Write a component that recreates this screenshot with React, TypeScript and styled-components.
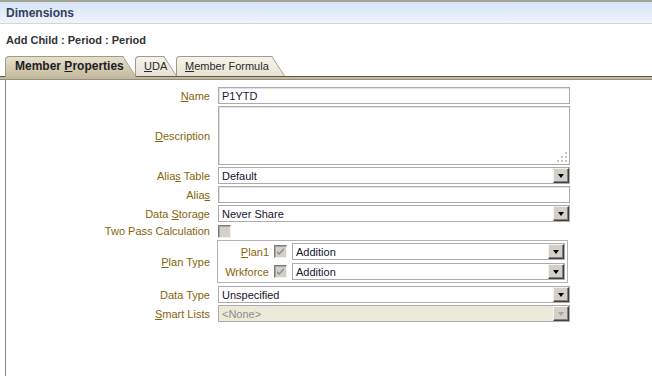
import React from 'react';
import styled, { createGlobalStyle } from 'styled-components';

const Global = createGlobalStyle`
  html, body { margin: 0; padding: 0; background: #fff; }
  * { box-sizing: border-box; }
`;

const Page = styled.div`
  width: 652px;
  height: 376px;
  overflow: hidden;
  font-family: "Liberation Sans", Arial, sans-serif;
  font-size: 11px;
  background: #fff;
  display: flex;
  flex-direction: column;
`;

const TitleBar = styled.div`
  height: 24px;
  flex: none;
  border-top: 2px solid #a4a494;
  border-bottom: 1px solid #d6d6cc;
  background: linear-gradient(#d7e3f5, #eef4fc);
  padding-left: 6px;
  display: flex;
  align-items: center;
  font-size: 12px;
  font-weight: bold;
  color: #33425c;
`;

const Subtitle = styled.div`
  height: 32px;
  flex: none;
  padding: 10px 0 0 6px;
  font-weight: bold;
  color: #333;
`;

const TabRow = styled.div`
  display: flex;
  align-items: flex-end;
  padding-left: 5px;
  height: 21px;
  margin-bottom: -1px;
  position: relative;
  z-index: 1;
  flex: none;
`;

const Tab = styled.div<{ $active?: boolean; $w: number }>`
  position: relative;
  z-index: ${p => (p.$active ? 3 : 1)};
  width: ${p => p.$w}px;
  height: ${p => (p.$active ? 21 : 20)}px;
  margin-bottom: ${p => (p.$active ? 0 : 1)}px;
  margin-right: -1px;
  padding: 0 0 ${p => (p.$active ? 1 : 0)}px ${p => (p.$active ? 10 : 9)}px;
  display: flex;
  align-items: center;
  font-size: ${p => (p.$active ? 12 : 11)}px;
  font-weight: ${p => (p.$active ? 'bold' : 'normal')};
  color: ${p => (p.$active ? '#1e1e1e' : '#2a2a2a')};
  &::before {
    content: '';
    position: absolute;
    left: 0;
    top: 0;
    bottom: 0;
    right: 13px;
    border: 1px solid #a29a84;
    border-right: none;
    border-bottom: none;
    border-top-left-radius: 4px;
    background: ${p => (p.$active ? 'linear-gradient(#e6e0cc, #c4bba0)' : 'linear-gradient(#f6f4ec, #e6e2d4)')};
  }
  &::after {
    content: '';
    position: absolute;
    top: 0;
    bottom: 0;
    right: 13px;
    width: 16px;
    border-top: 1px solid #a29a84;
    border-right: 1px solid #a29a84;
    transform: skewX(33deg);
    transform-origin: top left;
    background: ${p => (p.$active ? 'linear-gradient(#e6e0cc, #c4bba0)' : 'linear-gradient(#f6f4ec, #e6e2d4)')};
  }
  > span {
    position: relative;
    z-index: 1;
  }
`;

const Band = styled.div`
  height: 4px;
  flex: none;
  background: #c2ba9e;
  border-top: 1px solid #5e5a4a;
  border-bottom: 1px solid #948e7c;
`;

const Panel = styled.div`
  flex: 1;
  margin-left: 5px;
  border-left: 1px solid #8a8a8a;
  padding-top: 7px;
`;

const Form = styled.div`
  display: grid;
  grid-template-columns: 204px 352px;
  column-gap: 8px;
  row-gap: 2px;
`;

const Label = styled.div`
  justify-self: end;
  align-self: center;
  color: #86650a;
  white-space: nowrap;
  u {
    text-underline-offset: 1px;
  }
`;

const Field = styled.div<{ $h?: number }>`
  position: relative;
  height: ${p => p.$h ?? 17}px;
  border: 1px solid #ababab;
  box-shadow: inset 1px 1px 0 #e2e2e2;
  background: #fff;
  padding: ${p => (p.$h ? '2px 3px' : '0 3px')};
  display: flex;
  align-items: ${p => (p.$h ? 'flex-start' : 'center')};
  color: #18183c;
`;

const Grip = styled.svg`
  position: absolute;
  right: 1px;
  bottom: 1px;
`;

const SelectBox = styled.div<{ $disabled?: boolean }>`
  height: 17px;
  flex: 1;
  border: 1px solid #ababab;
  background: ${p => (p.$disabled ? '#ebe9d7' : '#fff')};
  color: ${p => (p.$disabled ? '#8e8e8e' : '#141430')};
  display: flex;
  align-items: center;
  padding-left: 3px;
`;

const SelectText = styled.span`
  flex: 1;
`;

const Caret = styled.div<{ $disabled?: boolean }>`
  width: 16px;
  height: 15px;
  background: #d4d0c8;
  border-top: 1px solid #f4f4f0;
  border-left: 1px solid #f4f4f0;
  border-right: 1px solid #404040;
  border-bottom: 1px solid #404040;
  box-shadow: inset -1px -1px 0 #808080;
  display: flex;
  align-items: center;
  justify-content: center;
  &::after {
    content: '';
    width: 0;
    height: 0;
    margin-top: 1px;
    border-left: 3.5px solid transparent;
    border-right: 3.5px solid transparent;
    border-top: 4px solid ${p => (p.$disabled ? '#a4a4a4' : '#000')};
  }
`;

const Check = styled.div`
  width: 13px;
  height: 13px;
  background: #d4d0c8;
  border-top: 1px solid #7a7a7a;
  border-left: 1px solid #7a7a7a;
  border-bottom: 1px solid #f2f2f2;
  border-right: 1px solid #f2f2f2;
  box-shadow: inset 1px 1px 0 #a8a8a8;
  display: flex;
  align-items: center;
  justify-content: center;
`;

const CheckCell = styled.div`
  height: 14px;
  display: flex;
  align-items: flex-end;
`;

const Group = styled.div`
  width: 351px;
  margin-left: -1px;
  border: 1px solid #b4b4b4;
  padding: 2px 2px 2px 0;
  display: grid;
  grid-template-columns: 51px 13px 1fr;
  column-gap: 5px;
  row-gap: 3px;
  margin-bottom: 1px;
  align-items: center;
`;

const SubLabel = styled.div`
  justify-self: end;
  color: #86650a;
  white-space: nowrap;
  u {
    text-underline-offset: 1px;
  }
`;

function Select({ value, disabled }: { value: string; disabled?: boolean }) {
  return (
    <SelectBox $disabled={disabled}>
      <SelectText>{value}</SelectText>
      <Caret $disabled={disabled} />
    </SelectBox>
  );
}

function Tick() {
  return (
    <svg width="9" height="9" viewBox="0 0 9 9">
      <path d="M1 4 L3 6 L8 1 L8 3 L3 8 L1 6 Z" fill="#8c8c8c" />
    </svg>
  );
}

export default function App() {
  return (
    <Page>
      <Global />
      <TitleBar>Dimensions</TitleBar>
      <Subtitle>Add Child : Period : Period</Subtitle>
      <TabRow>
        <Tab $active $w={131}>
          <span>Member <u>P</u>roperties</span>
        </Tab>
        <Tab $w={42}>
          <span><u>U</u>DA</span>
        </Tab>
        <Tab $w={109}>
          <span><u>M</u>ember Formula</span>
        </Tab>
      </TabRow>
      <Band />
      <Panel>
        <Form>
          <Label><u>N</u>ame</Label>
          <Field>P1YTD</Field>

          <Label><u>D</u>escription</Label>
          <Field $h={59}>
            <Grip width="11" height="11" viewBox="0 0 11 11">
              <rect x="8" y="0" width="2" height="2" fill="#c4c4c4" />
              <rect x="4" y="4" width="2" height="2" fill="#c4c4c4" />
              <rect x="8" y="4" width="2" height="2" fill="#c4c4c4" />
              <rect x="0" y="8" width="2" height="2" fill="#c4c4c4" />
              <rect x="4" y="8" width="2" height="2" fill="#c4c4c4" />
              <rect x="8" y="8" width="2" height="2" fill="#c4c4c4" />
            </Grip>
          </Field>

          <Label>Alia<u>s</u> Table</Label>
          <Select value="Default" />

          <Label>Alia<u>s</u></Label>
          <Field />

          <Label>Data <u>S</u>torage</Label>
          <Select value="Never Share" />

          <Label>Two Pass Calculation</Label>
          <CheckCell>
            <Check />
          </CheckCell>

          <Label><u>P</u>lan Type</Label>
          <Group>
            <SubLabel><u>P</u>lan1</SubLabel>
            <Check><Tick /></Check>
            <Select value="Addition" />
            <SubLabel>Wrkforce</SubLabel>
            <Check><Tick /></Check>
            <Select value="Addition" />
          </Group>

          <Label>Data Type</Label>
          <Select value="Unspecified" />

          <Label><u>S</u>mart Lists</Label>
          <Select value="<None>" disabled />
        </Form>
      </Panel>
    </Page>
  );
}
